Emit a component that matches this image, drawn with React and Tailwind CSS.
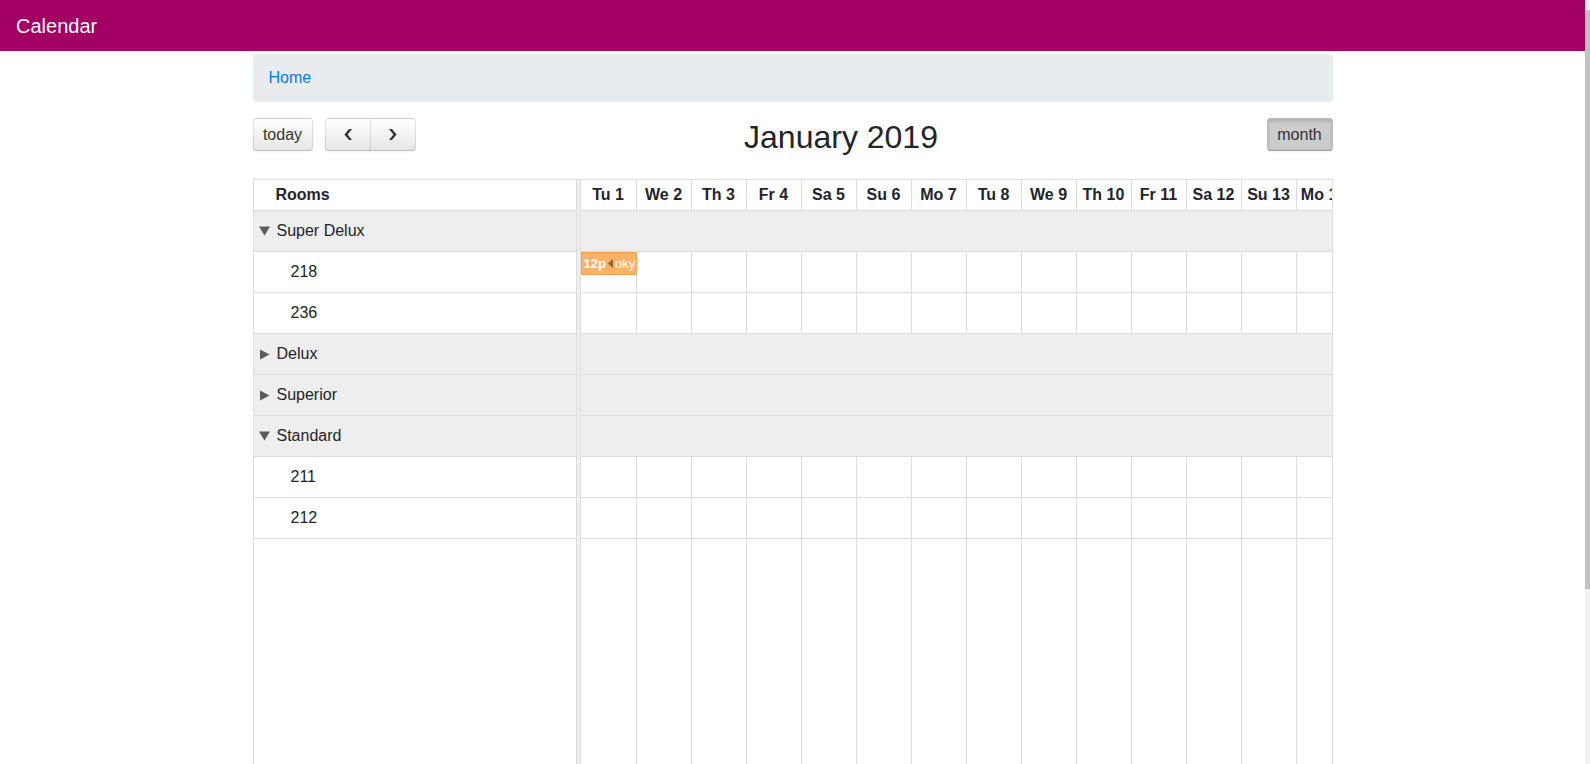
import React from 'react';

const DAY_NAMES = ['Tu', 'We', 'Th', 'Fr', 'Sa', 'Su', 'Mo'];
const days = Array.from({ length: 14 }, (_, i) => `${DAY_NAMES[i % 7]} ${i + 1}`);

const rows = [
  { type: 'group', label: 'Super Delux', open: true },
  { type: 'room', label: '218', event: true },
  { type: 'room', label: '236' },
  { type: 'group', label: 'Delux', open: false },
  { type: 'group', label: 'Superior', open: false },
  { type: 'group', label: 'Standard', open: true },
  { type: 'room', label: '211' },
  { type: 'room', label: '212' },
];

const btn =
  'h-[33px] flex items-center justify-center border border-[rgba(0,0,0,0.1)] border-b-[rgba(0,0,0,0.25)] bg-linear-to-b from-white to-[#e6e6e6] text-[#333] shadow-[inset_0_1px_0_rgba(255,255,255,0.2),0_1px_2px_rgba(0,0,0,0.05)] [text-shadow:0_1px_1px_rgba(255,255,255,0.75)]';

// first column is one pixel wider, as in the reference grid
const colClass = i => (i === 0 ? 'w-[56px]' : 'w-[55px]');

const Triangle = ({ open }) =>
  open ? (
    <svg width="11" height="10" viewBox="0 0 11 10" className="mr-[7px] shrink-0">
      <polygon points="0,0.5 11,0.5 5.5,9.5" fill="#5c5c5c" />
    </svg>
  ) : (
    <svg width="11" height="11" viewBox="0 0 11 11" className="mr-[7px] shrink-0">
      <polygon points="1,0.5 10.5,5.5 1,10.5" fill="#5c5c5c" />
    </svg>
  );

const Chevron = ({ dir }) => (
  <svg width="8" height="11" viewBox="0 0 8 11">
    {dir === 'left' ? (
      <polygon points="5,0 8,0 3.6,5.5 8,11 5,11 0.4,5.5" fill="#333" />
    ) : (
      <polygon points="3,0 0,0 4.4,5.5 0,11 3,11 7.6,5.5" fill="#333" />
    )}
  </svg>
);

export default function App() {
  return (
    <div className="flex h-[764px] w-[1590px] overflow-hidden bg-white font-['Liberation_Sans',Arial,sans-serif] text-[16px] text-[#212529]">
      <div className="w-[1585px] shrink-0">
        <div className="h-[51px] bg-[#a30063] flex items-center pl-[16px] text-white text-[20px]">
          Calendar
        </div>

        <div className="w-[1080px] mx-auto mt-[3px]">
          <div className="h-[48px] rounded bg-[#e9ecef] px-4 flex items-center text-[#007bff]">Home</div>

          <div className="mt-4 h-[61px] flex items-start">
            <div className="flex">
              <button className={`${btn} w-[60px] rounded`}>today</button>
              <div className="flex ml-[12px]">
                <button className={`${btn} w-[46px] rounded-l`}>
                  <Chevron dir="left" />
                </button>
                <button className={`${btn} w-[46px] -ml-px rounded-r`}>
                  <Chevron dir="right" />
                </button>
              </div>
            </div>
            <h2 className="flex-1 text-center text-[32px] leading-[1.2] font-normal text-[#212529]">January 2019</h2>
            <button className="w-[66px] h-[33px] rounded border border-[rgba(0,0,0,0.1)] border-b-[rgba(0,0,0,0.25)] bg-[#cccccc] text-[#333] shadow-[inset_0_2px_4px_rgba(0,0,0,0.15),0_1px_2px_rgba(0,0,0,0.05)]">
              month
            </button>
          </div>

          <div className="flex border border-[#ddd]">
            <div className="w-[322px] flex flex-col">
              <div className="h-[31px] border-b border-[#ddd] flex items-center pl-[22px] font-bold">Rooms</div>
              {rows.map(r =>
                r.type === 'group' ? (
                  <div key={r.label} className="h-[41px] border-b border-[#ddd] bg-[#eee] flex items-center pl-[5px]">
                    <Triangle open={r.open} />
                    {r.label}
                  </div>
                ) : (
                  <div key={r.label} className="h-[41px] border-b border-[#ddd] flex items-center pl-[37px]">
                    {r.label}
                  </div>
                )
              )}
              <div className="h-[400px]" />
            </div>

            <div className="w-[5px] border-x border-[#ddd] bg-[#eee]" />

            <div className="w-[751px] overflow-hidden">
              <div className="w-[771px]">
                <div className="h-[31px] border-b border-[#ddd] flex">
                  {days.map((d, i) => (
                    <div key={d} className={`${colClass(i)} shrink-0 border-r border-[#ddd] flex items-center justify-center font-bold whitespace-nowrap`}>
                      {d}
                    </div>
                  ))}
                </div>
                {rows.map(r =>
                  r.type === 'group' ? (
                    <div key={r.label} className="h-[41px] border-b border-[#ddd] bg-[#eee]" />
                  ) : (
                    <div key={r.label} className="relative h-[41px] border-b border-[#ddd] flex">
                      {days.map((d, i) => (
                        <div key={d} className={`${colClass(i)} shrink-0 border-r border-[#ddd]`} />
                      ))}
                      {r.event && (
                        <div className="absolute left-0 top-0 w-[56px] h-[23px] bg-[#ffb266] border border-[#f5a352] flex items-center pl-[2px] overflow-hidden whitespace-nowrap text-[13px] text-white">
                          <span className="font-bold">12p</span>
                          <svg width="5" height="9" viewBox="0 0 5 9" className="mx-[2px] shrink-0">
                            <polygon points="5,0 0,4.5 5,9" fill="rgba(0,0,0,0.45)" />
                          </svg>
                          <span>okyanus</span>
                        </div>
                      )}
                    </div>
                  )
                )}
                <div className="h-[400px] flex">
                  {days.map((d, i) => (
                    <div key={d} className={`${colClass(i)} shrink-0 border-r border-[#ddd]`} />
                  ))}
                </div>
              </div>
            </div>
          </div>
        </div>
      </div>

      <div className="w-[5px] bg-[#f1f1f1]">
        <div className="mt-[10px] h-[579px] bg-[#c1c1c1]" />
      </div>
    </div>
  );
}
